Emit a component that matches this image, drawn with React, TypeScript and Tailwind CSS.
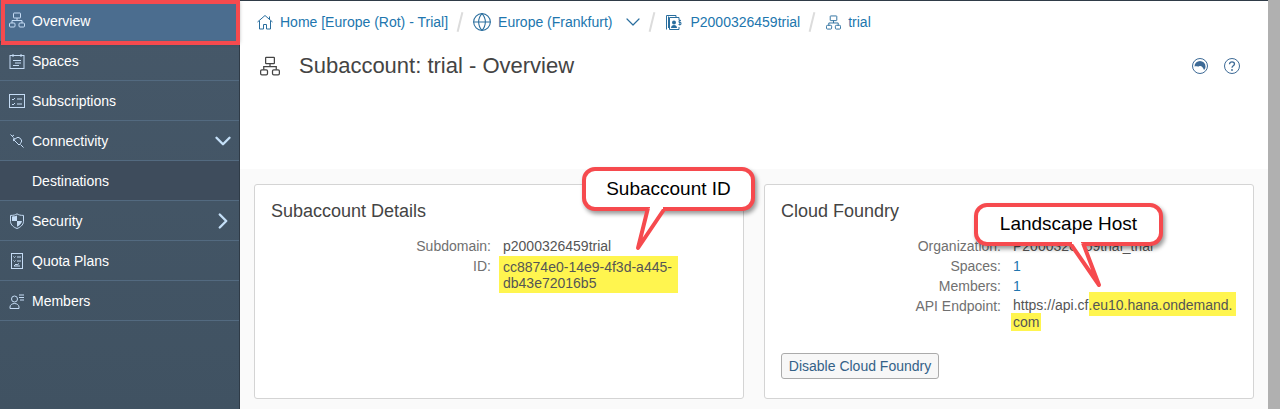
import { ChevronDown, ChevronRight, Globe } from "lucide-react";

function OrgIcon({ className }: { className?: string }) {
  return (
    <svg viewBox="0 0 16 16" fill="none" stroke="currentColor" strokeWidth="1" className={className}>
      <rect x="4.5" y="1" width="7" height="5" rx="0.5" />
      <rect x="0.5" y="11" width="5.5" height="4" rx="1" />
      <rect x="10" y="11" width="5.5" height="4" rx="1" />
      <path d="M8 6v2.5M3 11V8.5h10V11" />
    </svg>
  );
}

function HomeIcon() {
  return (
    <svg viewBox="0 0 16 16" fill="none" stroke="currentColor" className="mr-[7px] h-4 w-4 text-[#2a6e9e]">
      <path d="M.5 8L8 1.500 15.500 8M12.500 2.500v3" />
      <path d="M2.500 7v8h4v-4.500h3V15h4V7" />
    </svg>
  );
}

function SpacesIcon() {
  return (
    <svg viewBox="0 0 16 16" fill="none" stroke="currentColor" className="h-4 w-4">
      <rect x="1" y="2.5" width="14" height="13" />
      <path d="M4 1v3M12 1v3M4 7.5h8M6 10h6M4 12.5h6" />
    </svg>
  );
}

function SubsIcon() {
  return (
    <svg viewBox="0 0 16 16" fill="none" stroke="currentColor" className="h-4 w-4">
      <rect x="0.5" y="1.5" width="15" height="13" />
      <path d="M3 6l1 1 2-2M3 11l1 1 2-2M8 6h5M8 11h5" />
    </svg>
  );
}

function PlugIcon() {
  return (
    <svg viewBox="0 0 16 16" fill="none" stroke="currentColor" className="h-4 w-4">
      <path d="M1.5 1.5l3 3M11.5 11.5l3 3" />
      <path d="M4 6l6 6 1.5-1.5a3.5 3.5 0 0 0-5-5z" />
      <path d="M3 3.5l2-1.5M4 8l2.5-2" />
    </svg>
  );
}

function ShieldIcon() {
  return (
    <svg viewBox="0 0 16 16" className="h-4 w-4">
      <path d="M8 .8c1.500 1.200 3.500 1.600 6.500 1.600v6C14.500 12 11 14.500 8 15.500 5 14.500 1.500 12 1.500 8.400v-6C4.500 2.400 6.500 2 8 .8z" fill="none" stroke="currentColor" />
      <path d="M8 2.500v5.500H3V3.400c2 0 3.500-.3 5-.9zM8 8h5c-.3 2.500-2.500 4.500-5 5.800z" fill="currentColor" />
    </svg>
  );
}

function QuotaIcon() {
  return (
    <svg viewBox="0 0 16 16" fill="none" stroke="currentColor" className="h-4 w-4">
      <rect x="2.500" y="0.500" width="11" height="15" />
      <path d="M4.500 3.500l1 1 1-1M8 4h4M4.500 7.500l1 1 1-1M8 8h4M5 13l2-2 1 1 2-1.500M11 13H5" />
    </svg>
  );
}

function MembersIcon() {
  return (
    <svg viewBox="0 0 16 16" fill="none" stroke="currentColor" className="h-4 w-4">
      <circle cx="5.500" cy="6" r="3" />
      <path d="M1 15.500v-1.500c0-2 2-3.500 4.500-3.500s4.500 1.500 4.500 3.500v1.500zM10 2h5M10 4.500h5M11 7h4" />
    </svg>
  );
}

function AccountIcon() {
  return (
    <svg viewBox="0 0 16 16" className="ml-[2px] h-4 w-4 text-[#2a6e9e]">
      <path d="M2.500 14V2.500M.5 15.500V1.500H10V3" fill="none" stroke="currentColor" />
      <path d="M3.500 15.500V3.500H13V6M3.500 15.500H13V13" fill="none" stroke="currentColor" />
      <circle cx="8" cy="8.500" r="2" fill="currentColor" />
      <path d="M5 14c0-2 1.500-3 3-3s3 1 3 3z" fill="currentColor" />
      <path d="M15 6.500h-2v2h2v2h-2.500M13.800 5.500v6" fill="none" stroke="currentColor" strokeWidth="0.9" />
    </svg>
  );
}

function Sep() {
  return <span className="mx-[11px] h-[20px] w-[2px] rotate-[14deg] bg-[#dcdcdc]" />;
}

function NavRow({
  icon,
  label,
  tail,
  sub,
}: {
  icon?: React.ReactNode;
  label: string;
  tail?: React.ReactNode;
  sub?: boolean;
}) {
  return (
    <div
      className={`flex h-10 items-center border-b border-[#536a80] pr-[3px] text-white ${sub ? "bg-[#3e4c5c]" : ""}`}
    >
      <span className="flex w-[32px] shrink-0 justify-center pl-[1px] text-[#c5dcf5]">{icon}</span>
      <span className="pt-[2px] text-[14px]">{label}</span>
      <span className="ml-auto text-[#c5e0f8]">{tail}</span>
    </div>
  );
}

function Row({ label, children }: { label: string; children: React.ReactNode }) {
  return (
    <div className="grid grid-cols-[220px_1fr] gap-x-[12px] text-[14px] leading-[20px]">
      <span className="text-right text-[#707070]">{label}</span>
      <div className="text-[#555555]">{children}</div>
    </div>
  );
}

function Callout({ label, tail, className }: { label: string; tail: React.ReactNode; className: string }) {
  return (
    <div className={`absolute ${className}`}>
      <div className="flex h-full items-center justify-center rounded-[13px] border-[4px] border-[#f64a4e] bg-white text-[19px] text-black shadow-[2px_3px_4px_rgba(0,0,0,0.4)]">
        {label}
      </div>
      {tail}
    </div>
  );
}

export default function App() {
  return (
    <div className="relative flex h-[409px] w-[1280px] overflow-hidden bg-white font-['Liberation_Sans',Arial,sans-serif]">
      <aside className="h-full w-[240px] shrink-0 border-r border-[#2f3b47] bg-gradient-to-b from-[#465869] to-[#405262]">
        <div className="relative z-10 flex h-[41px] items-center border-b border-[#536a80] bg-[#4b6d8f] text-white shadow-[0_2px_4px_rgba(0,0,0,0.4)]">
          <span className="flex w-[32px] shrink-0 justify-center pl-[1px] text-[#c5dcf5]">
            <OrgIcon className="h-4 w-4" />
          </span>
          <span className="pt-[2px] text-[14px]">Overview</span>
        </div>
        <NavRow icon={<SpacesIcon />} label="Spaces" />
        <NavRow icon={<SubsIcon />} label="Subscriptions" />
        <NavRow
          icon={<PlugIcon />}
          label="Connectivity"
          tail={<ChevronDown size={26} strokeWidth={2.2} />}
        />
        <NavRow label="Destinations" sub />
        <NavRow
          icon={<ShieldIcon />}
          label="Security"
          tail={<ChevronRight size={26} strokeWidth={2.2} />}
        />
        <NavRow icon={<QuotaIcon />} label="Quota Plans" />
        <NavRow icon={<MembersIcon />} label="Members" />
      </aside>

      <main className="flex min-w-0 flex-1 flex-col border-t border-[#2f3b47]">
        <header className="h-[168px] shrink-0 bg-white pl-[17px] pr-[28px] pt-[11px]">
          <nav className="flex h-5 items-center text-[14px] text-[#2176ae]">
            <HomeIcon />
            <span>Home [Europe (Rot) - Trial]</span>
            <Sep />
            <Globe size={20} strokeWidth={1.300} className="mr-[6px] text-[#2a6e9e]" />
            <span>Europe (Frankfurt)</span>
            <ChevronDown size={24} strokeWidth={1.200} className="-mr-[5px] ml-[9px] text-[#2a6e9e]" />
            <Sep />
            <AccountIcon />
            <span className="ml-[8px]">P2000326459trial</span>
            <Sep />
            <OrgIcon className="ml-[2px] h-[15px] w-[15px] text-[#2a6e9e]" />
            <span className="ml-[7px]">trial</span>
          </nav>
          <div className="mt-[13px] flex h-[40px] items-center text-[#444444]">
            <OrgIcon className="ml-[3px] mt-[2px] h-5 w-5 text-[#444444]" />
            <h1 className="ml-[19px] text-[22px] font-normal">Subaccount: trial - Overview</h1>
            <div className="ml-auto mt-[2px] flex items-center gap-[16px] text-[#3d6a96]">
              <svg viewBox="0 0 16 16" className="h-4 w-4">
                <circle cx="8" cy="8" r="7.500" fill="none" stroke="currentColor" />
                <path d="M2.500 8.500a5.500 5.500 0 0 1 11 0c0 1.500-.5 2.500-1.500 3.500-1-2-1.500-3.500-3.500-4-1-.3-1.500.5-2.500.5-1 0-2.500-.5-3.500 0z" fill="currentColor" />
              </svg>
              <svg viewBox="0 0 16 16" className="h-4 w-4">
                <circle cx="8" cy="8" r="7.500" fill="none" stroke="currentColor" />
                <path d="M5.500 6.200c0-1.500 1.100-2.400 2.500-2.400s2.500.9 2.500 2.200c0 1.800-2.500 1.900-2.500 3.800" fill="none" stroke="currentColor" strokeWidth="1.300" />
                <circle cx="8" cy="12" r="0.900" fill="currentColor" />
              </svg>
            </div>
          </div>
        </header>

        <section className="grid flex-1 grid-cols-[490px_490px] gap-x-[20px] bg-[#fafafa] pl-[14px] pt-[15px]">
          <div className="h-[215px] rounded-[3px] border border-[#d4d4d4] bg-white pl-[16px] pt-[15px]">
            <h2 className="text-[18px] font-normal leading-[22px] text-[#444444]">Subaccount Details</h2>
            <div className="mt-[14px]">
              <Row label="Subdomain:">p2000326459trial</Row>
              <Row label="ID:">
                <span className="-ml-[4px] block w-[179px] bg-[#fff54f] px-[4px] pb-[2px] pt-[3px] leading-[16px]">
                  cc8874e0-14e9-4f3d-a445-
                  <br />
                  db43e72016b5
                </span>
              </Row>
            </div>
          </div>

          <div className="flex h-[215px] flex-col rounded-[3px] border border-[#d4d4d4] bg-white pl-[16px] pt-[15px]">
            <h2 className="text-[18px] font-normal leading-[22px] text-[#444444]">Cloud Foundry</h2>
            <div className="mt-[14px]">
              <Row label="Organization:">P2000326459trial_trial</Row>
              <Row label="Spaces:">
                <span className="text-[#2176ae]">1</span>
              </Row>
              <Row label="Members:">
                <span className="text-[#2176ae]">1</span>
              </Row>
              <Row label="API Endpoint:">
                <div className="pt-[1px] leading-[17px]">
                  <span className="relative z-10">https://api.cf.</span>
                  <span className="-ml-[3px] bg-[#fff54f] pb-[3px] pl-[3px] pr-[3px] pt-[5px]">eu10.hana.ondemand.</span>
                  <br />
                  <span className="-ml-[2px] bg-[#fff54f] px-[2px] py-[1px]">com</span>
                </div>
              </Row>
            </div>
            <button className="mt-[22px] h-[26px] w-[158px] rounded-[3px] border border-[#ababab] bg-[#f7f7f7] text-[14px] text-[#346187]">
              Disable Cloud Foundry
            </button>
          </div>
        </section>
      </main>

      <div className="w-[12px] shrink-0 bg-[#b0b0b0]" />

      {/* red highlight on the active nav row */}
      <div className="absolute left-[1px] top-0 z-20 h-[45px] w-[239px] border-[4px] border-[#f64a4e]" />

      <Callout
        label="Subaccount ID"
        className="left-[582px] top-[167px] z-20 h-[44px] w-[173px]"
        tail={
          <svg className="absolute left-0 top-0 h-[90px] w-full overflow-visible">
            <path d="M66 41L56 81 83 41" fill="white" stroke="#f64a4e" strokeWidth="4" strokeLinejoin="round" />
            <path d="M68 37h13v5H68z" fill="white" />
          </svg>
        }
      />
      <Callout
        label="Landscape Host"
        className="left-[974px] top-[203px] z-20 h-[43px] w-[189px]"
        tail={
          <svg className="absolute left-0 top-0 h-[90px] w-full overflow-visible">
            <path d="M96 40L125 82 109 40" fill="white" stroke="#f64a4e" strokeWidth="4" strokeLinejoin="round" />
            <path d="M98 36h9v5H98z" fill="white" />
          </svg>
        }
      />
    </div>
  );
}
